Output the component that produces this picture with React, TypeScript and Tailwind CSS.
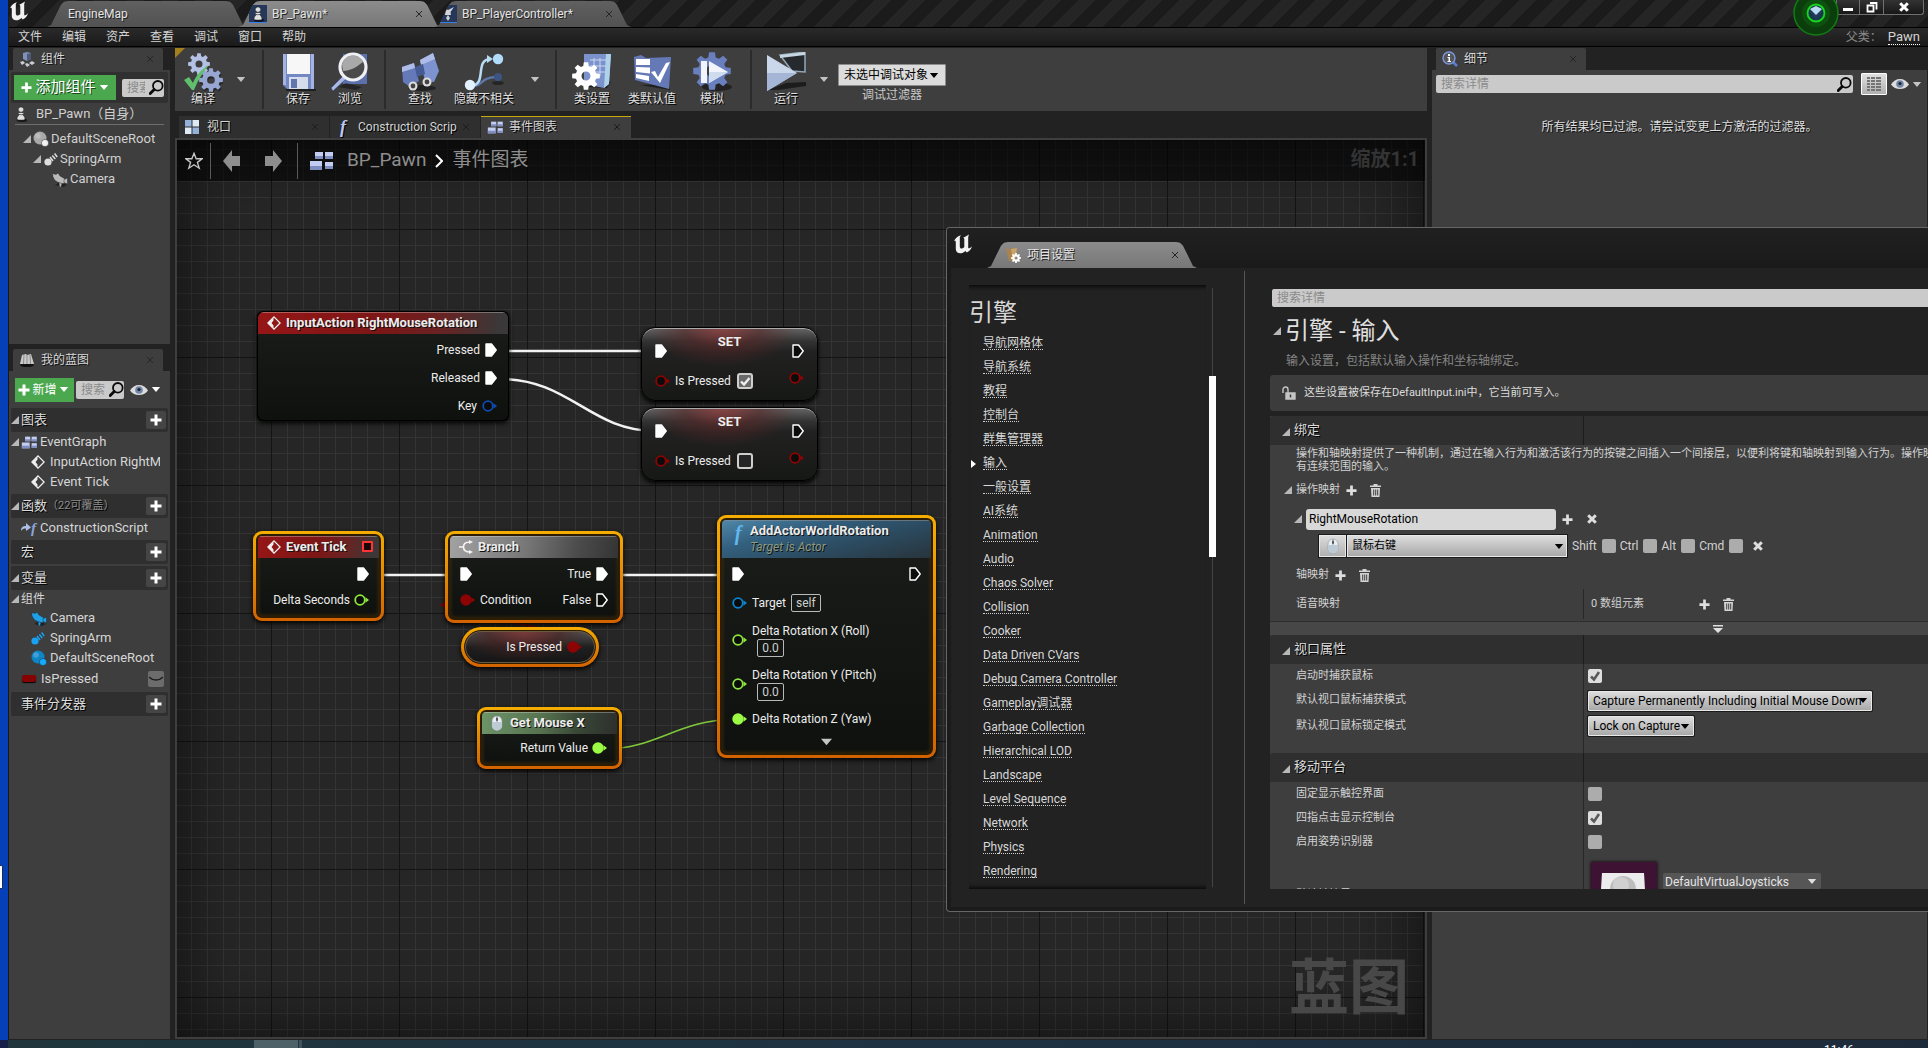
import React from 'react';
import clsx from 'clsx';

const menuItems = ['文件', '编辑', '资产', '查看', '调试', '窗口', '帮助'];

const settingsLinks = [
  '导航网格体', '导航系统', '教程', '控制台', '群集管理器', '输入', '一般设置', 'AI系统',
  'Animation', 'Audio', 'Chaos Solver', 'Collision', 'Cooker', 'Data Driven CVars',
  'Debug Camera Controller', 'Gameplay调试器', 'Garbage Collection', 'Hierarchical LOD',
  'Landscape', 'Level Sequence', 'Network', 'Physics', 'Rendering',
];

type IconProps = { className?: string };

/* ---------- small icons ---------- */

const gearPath = (cx: number, cy: number, r: number, teeth: number) => {
  const pts: string[] = [];
  const step = (Math.PI * 2) / teeth;
  for (let i = 0; i < teeth; i++) {
    const a = i * step;
    [[-0.34, 0.74], [-0.2, 1], [0.2, 1], [0.34, 0.74]].forEach(([o, k]) => {
      pts.push(`${(cx + Math.cos(a + o * step) * r * k).toFixed(2)} ${(cy + Math.sin(a + o * step) * r * k).toFixed(2)}`);
    });
  }
  const h = r * 0.32;
  return `M${pts.join('L')}ZM${cx - h} ${cy}a${h} ${h} 0 1 0 ${h * 2} 0a${h} ${h} 0 1 0 ${-h * 2} 0Z`;
};

const UnrealLogo = ({ className }: IconProps) => (
  <svg viewBox="0 0 20 20" className={clsx('h-5 w-5 shrink-0', className)} fill="#f2f2f2">
    <path d="M1 7C2.500 4 5 2 8 1.200L6.800 3v9.500c0 1.500 1 2.300 2.200 2 .9-.2 1.700-.8 2.300-1.500V5.200c0-.9-.4-1.300-1.100-1.500C12 3 14.200 2 16 .6L15.200 3v10.500c0 .8.500 1 1.200.7.900-.4 1.800-1.100 2.600-2-.9 3.200-3 5.200-5.200 6.300L12.400 17c-1.600 1.700-3.400 2.300-5.200 2.300-2.400 0-4.400-1.600-4.400-4.300V8.300C2.800 6.800 2.200 6.400 1 7z" />
  </svg>
);

const Pawn = ({ className }: IconProps) => (
  <svg viewBox="0 0 14 18" className={clsx('h-4 w-3.5 shrink-0', className)}>
    <ellipse cx="8" cy="16" rx="6" ry="2" fill="#000" opacity=".6" />
    <g fill="#e0e0e0" stroke="#222" strokeWidth=".6">
      <path d="M2.500 14.500C2.500 11.500 5 11 5 9h4c0 2 2.500 2.500 2.500 5.500 0 1.800-9 1.800-9 0z" />
      <ellipse cx="7" cy="8.500" rx="3.200" ry="1.300" />
      <circle cx="7" cy="4" r="3" />
    </g>
  </svg>
);

const Caret = ({ className }: IconProps) => (
  <svg viewBox="0 0 10 6" className={clsx('h-1.5 w-2.5 shrink-0', className)} fill="currentColor">
    <path d="M0 0h10L5 6z" />
  </svg>
);

const Tri = ({ className }: IconProps) => (
  <svg viewBox="0 0 8 8" className={clsx('h-2 w-2 shrink-0', className)} fill="#b8b8b8">
    <path d="M8 0v8H0z" />
  </svg>
);

const Plus = ({ className }: IconProps) => (
  <svg viewBox="0 0 12 12" className={clsx('h-3 w-3 shrink-0', className)} fill="currentColor">
    <path d="M4.500.5h3v4h4v3h-4v4h-3v-4h-4v-3h4z" />
  </svg>
);

const Cross = ({ className }: IconProps) => (
  <svg viewBox="0 0 10 10" className={clsx('h-2.5 w-2.5 shrink-0', className)} stroke="currentColor" strokeWidth="3" fill="none">
    <path d="M1.200 1.200l7.600 7.600M8.800 1.200L1.200 8.800" />
  </svg>
);

const Trash = ({ className }: IconProps) => (
  <svg viewBox="0 0 11 13" className={clsx('h-[13px] w-[11px] shrink-0', className)} fill="#d4d4d4">
    <path d="M3.500 0h4v1.500H11V3H0V1.500h3.500zM1 4h9l-.5 9h-8zM3.200 5.500v6h1v-6zm2 0v6h1v-6zm2 0v6h1v-6z" fillRule="evenodd" />
  </svg>
);

const CloseX = ({ className }: IconProps) => (
  <button aria-label="关闭" className={clsx('flex h-3 w-3 items-center justify-center', className)}>
    <svg viewBox="0 0 6 6" className="h-1.5 w-1.5" stroke="#262626" fill="none">
      <path d="M0 0l6 6M6 0L0 6" />
    </svg>
  </button>
);

const Search = ({ className }: IconProps) => (
  <svg viewBox="0 0 15 15" className={clsx('h-[15px] w-[15px] shrink-0', className)} fill="none" stroke="#0a0a0a">
    <circle cx="8.800" cy="5.800" r="4.800" strokeWidth="1.800" />
    <path d="M5.200 9.600L1.200 13.600" strokeWidth="2.800" strokeLinecap="round" />
  </svg>
);

const Eye = ({ className }: IconProps) => (
  <svg viewBox="0 0 18 12" className={clsx('h-3 w-[18px] shrink-0', className)}>
    <path d="M0 6.500C4-1 14-1 18 6.500c-4 6-14 6-18 0z" fill="#dcdcdc" />
    <circle cx="9" cy="6" r="3.800" fill="#6f86a8" />
    <circle cx="9" cy="5.500" r="1.600" fill="#223" />
  </svg>
);

const Blocks = ({ className }: IconProps) => (
  <svg viewBox="0 0 24 20" className={clsx('shrink-0', className)}>
    <g fill="#c3cdf2">
      <rect x="6" y="1" width="8" height="7" />
      <rect x="16" y="1" width="8" height="7" />
      <rect x="16" y="11" width="8" height="7" />
      <rect x="1" y="10" width="12" height="9" />
    </g>
    <path d="M6 5h8v3H6zM16 5h8v3h-8zM16 15h8v3h-8zM1 15h12v4H1z" fill="#7f8dc0" />
  </svg>
);

const EventDiamond = ({ className }: IconProps) => (
  <svg viewBox="0 0 14 14" className={clsx('h-3.5 w-3.5 shrink-0', className)}>
    <path d="M7 .9L13.100 7 7 13.100.9 7z" fill="none" stroke="#f0f0f0" strokeWidth="1.300" />
    <path d="M6.500 2v2.500L4.500 7l2 2.500V12L1 7z" fill="#f0f0f0" />
  </svg>
);

const BranchIcon = () => (
  <svg viewBox="0 0 14 14" className="h-3.5 w-3.5 shrink-0" fill="none" stroke="#f4f4f4" strokeWidth="1.600">
    <path d="M0 7h4M11 2C6 2 4.500 4 4.500 7s1.500 5 6.500 5" />
    <path d="M10 0l4 2-4 2zM10 10l4 2-4 2z" fill="#f4f4f4" stroke="none" />
  </svg>
);

const MouseIcon = () => (
  <svg viewBox="0 0 12 16" className="h-4 w-3 shrink-0">
    <rect x="1" y="1" width="10" height="14.500" rx="5" fill="#e9eef2" stroke="#8d979d" strokeWidth=".6" />
    <path d="M1 7h10v3.500a5 5 0 0 1-10 0z" fill="#bccbd6" />
    <path d="M6 1v6" stroke="#889" strokeWidth=".8" />
    <rect x="5" y="2.500" width="2" height="3.500" rx="1" fill="#555" />
  </svg>
);

const CameraIcon = ({ color }: { color: string }) => (
  <svg viewBox="0 0 16 15" className="h-[15px] w-4 shrink-0">
    <path d="M3 13l5-3 7 3-4 2z" fill="#111" opacity=".6" />
    <g fill={color} stroke="#1a1a1a" strokeWidth=".4">
      <path d="M.5 1.500L4 2.500 6 1l2 3 4.500 2.500L13 11l-4 1-6-3.500-2-3.500z" />
      <path d="M12 7.500l3.500-1.500v6L12 10.500zM7 10.500l3 1-1 3.500H7.500z" />
    </g>
  </svg>
);

const ArmIcon = ({ color }: { color: string }) => (
  <svg viewBox="0 0 14 14" className="h-3.5 w-3.5 shrink-0">
    <circle cx="4" cy="10" r="3.600" fill={color} />
    <path d="M6 5l3 4M8.300 3.500l3 3.500M10.600 1.500l2.600 3.500" stroke={color} strokeWidth="1.500" />
  </svg>
);

const SceneIcon = ({ color, dot }: { color: string; dot: string }) => (
  <svg viewBox="0 0 16 16" className="h-4 w-4 shrink-0">
    <circle cx="7" cy="7" r="6.500" fill={color} />
    <circle cx="5" cy="5" r="2.800" fill="#fff" opacity=".22" />
    <circle cx="12" cy="12" r="3.600" fill={dot} stroke="#2b2b2b" strokeWidth=".5" />
  </svg>
);

const FuncGlyph = ({ className }: IconProps) => (
  <span className={clsx("font-['Liberation_Serif',serif] font-bold italic", className)}>f</span>
);

/* ---------- toolbar icons ---------- */

const ToolIcon = ({ children }: { children: React.ReactNode }) => (
  <svg viewBox="0 0 40 40" className="h-10 w-10">{children}</svg>
);

const CompileIcon = () => (
  <ToolIcon>
    <path d={gearPath(29, 30, 12, 8)} fill="#000" opacity=".35" fillRule="evenodd" />
    <path d={gearPath(16, 12, 11, 8)} fill="#b4c0e4" fillRule="evenodd" />
    <path d={gearPath(28, 28, 12, 8)} fill="#97a6d2" fillRule="evenodd" />
    <path d="M1 28l5-3 4 6C13 23 19 17 26 13c-6 7-11 15-15 25H9z" fill="#5fbf6d" />
  </ToolIcon>
);

const SaveIcon = () => (
  <ToolIcon>
    <path d="M8 37h30v2H8z" fill="#000" opacity=".5" />
    <path d="M5 2h31v35H9l-4-4z" fill="#7488c4" />
    <path d="M5 2h3v31H5zM33 2h3v35h-3z" fill="#a4b4e2" />
    <path d="M9 2h23v20H9z" fill="#f7f7f7" />
    <path d="M11 25h19v12H11z" fill="#d7dcec" />
    <path d="M13 27h6v9h-6z" fill="#6274ae" />
  </ToolIcon>
);

const BrowseIcon = () => (
  <ToolIcon>
    <path d="M13 2h24v30H13z" fill="#5c70ac" />
    <path d="M8 35l8-4 16 4-6 3z" fill="#000" opacity=".4" />
    <path d="M13 24L1 36l2 3 13-12z" fill="#a9b8e4" stroke="#39466e" strokeWidth=".6" />
    <circle cx="23" cy="15" r="13" fill="#4a4a4a" stroke="#eef0f4" strokeWidth="3.200" />
    <path d="M12 13a11 11 0 0 1 21-3c-5 3-8 8-20 9z" fill="#c9c9c9" opacity=".75" />
  </ToolIcon>
);

const FindIcon = () => (
  <ToolIcon>
    <ellipse cx="22" cy="36" rx="14" ry="3" fill="#000" opacity=".45" />
    <path d="M2 15l12-4 5 18-9 6-7-5z" fill="#6379b8" />
    <path d="M20 8l13-7 6 18-5 11-9-1z" fill="#7d93d0" />
    <path d="M2 15l12-4 1 5-13 4zM20 8l13-7 2 6-14 6z" fill="#aebde8" />
    <path d="M15 15l8-3 2 10-8 3z" fill="#465a94" />
    <circle cx="13" cy="34" r="4.500" fill="#dcdcdc" />
    <circle cx="13" cy="34" r="2.400" fill="#444" />
    <circle cx="27" cy="30" r="4.500" fill="#dcdcdc" />
    <circle cx="27" cy="30" r="2.400" fill="#444" />
  </ToolIcon>
);

const HideIcon = () => (
  <ToolIcon>
    <ellipse cx="34" cy="31" rx="6" ry="2" fill="#000" opacity=".4" />
    <path d="M6 34C22 34 14 26 32 25" fill="none" stroke="#5d76a8" strokeWidth="2.500" />
    <path d="M6 34C24 34 10 8 26 7" fill="none" stroke="#b7dcf2" strokeWidth="2.500" />
    <path d="M23 3l6 4-6 4z" fill="#b7dcf2" />
    <circle cx="34" cy="7" r="5.200" fill="#b3dcfa" />
    <circle cx="6" cy="33" r="5.200" fill="#e2f1fb" />
    <circle cx="34" cy="25" r="4" fill="#3d5480" />
  </ToolIcon>
);

const ClassSettingsIcon = () => (
  <ToolIcon>
    <path d="M13 35l22 1 4-6-6-2z" fill="#000" opacity=".5" />
    <path d="M12 2h27l-2 30-5 4-20-4z" fill="#7b92cc" />
    <path d="M34 2h5l-2 30-5 4z" fill="#aed2ea" />
    <path d="M18 8h16M18 14h16M18 20h15M22 6v22M28 6v18" stroke="#ccd8f2" />
    <path d={gearPath(14, 24, 14, 8)} fill="#fff" fillRule="evenodd" />
  </ToolIcon>
);

const ClassDefaultsIcon = () => (
  <ToolIcon>
    <path d="M8 33l30 5-2-6z" fill="#000" opacity=".5" />
    <path d="M2 5l7-2 5 3 25-1-2 32L3 28z" fill="#6579b6" />
    <path d="M4 7h14v6H4zM4 15l14 .5v6L4 20zM4 22l13 2v5L4 26z" fill="#fff" />
    <path d="M19 20l4-1 3 6 8-14 4-1-10 21z" fill="#fff" />
  </ToolIcon>
);

const SimulateIcon = () => (
  <ToolIcon>
    <ellipse cx="25" cy="35" rx="15" ry="4" fill="#000" opacity=".45" />
    <path d={gearPath(20, 19, 19, 8)} fill="#6a80be" />
    <path d="M9 9h6v22H9zM17 9l19 11-19 11z" fill="#f1f5fb" />
    <path d="M17 20h19L17 31z" fill="#cfdcee" />
  </ToolIcon>
);

const PlayIcon = () => (
  <ToolIcon>
    <path d="M2 38l18-7 20-1v4L12 38z" fill="#000" opacity=".55" />
    <path d="M14 3l25-3v20l-13-1z" fill="#262a2e" stroke="#93a6b6" strokeWidth="1.500" />
    <path d="M14 3l25-3v3L14 6z" fill="#c7d6e2" />
    <path d="M1 3l30 18L1 39z" fill="#cad7ea" />
    <path d="M1 21h30L1 39z" fill="#a5b5d6" />
  </ToolIcon>
);

/* ---------- pins ---------- */

const ExecPin = ({ filled }: { filled?: boolean }) => (
  <svg viewBox="0 0 12 14" className="h-3.5 w-3 shrink-0">
    <path d="M1 1h5.500L11.200 7 6.500 13H1z" fill={filled ? '#fff' : '#0c0c0c'} stroke="#fff" strokeWidth="1.400" strokeLinejoin="round" />
  </svg>
);

const DataPin = ({ color, filled }: { color: string; filled?: boolean }) => (
  <svg viewBox="0 0 15 12" className="h-3 w-[15px] shrink-0">
    <circle cx="6" cy="6" r="4.800" fill={filled ? color : '#0b0b0b'} stroke={color} strokeWidth="1.800" />
    <path d="M11.500 3.200L15 6l-3.500 2.800z" fill={color} />
  </svg>
);

/* ---------- shared pieces ---------- */

const Check = ({ label, checked }: { label: string; checked?: boolean }) => (
  <span className="relative flex h-3.5 w-3.5 shrink-0">
    <input
      type="checkbox"
      aria-label={label}
      defaultChecked={checked}
      className="h-3.5 w-3.5 appearance-none rounded-[2px] bg-[#acacac] checked:bg-[#dedede]"
    />
    {checked && (
      <svg viewBox="0 0 14 14" className="pointer-events-none absolute inset-0" fill="none" stroke="#5a5a5a" strokeWidth="2.600">
        <path d="M3 7.500l3 3 5-7.500" />
      </svg>
    )}
  </span>
);

const PanelTab = ({ icon, label }: { icon: React.ReactNode; label: string }) => (
  <div className="ml-1 flex h-[22px] w-[150px] items-center rounded-t-[2px] bg-[#3e3e3e] pr-[7px] pl-1.5 text-[12px] text-[#d8d8d8] [text-shadow:1px_1px_0_#111]">
    <span className="flex w-[22px]">{icon}</span>
    <span className="flex-1">{label}</span>
    <CloseX />
  </div>
);

const WindowTab = ({ label, icon, active, className }: { label: string; icon?: React.ReactNode; active?: boolean; className?: string }) => (
  <div
    className={clsx(
      'flex h-[26px] shrink-0 items-center pr-4 text-[12px] text-[#e4e4e4] [clip-path:polygon(0_100%,4px_92%,14px_14%,17px_3%,21px_0,calc(100%-21px)_0,calc(100%-17px)_3%,calc(100%-14px)_14%,calc(100%-4px)_92%,100%_100%)] [text-shadow:1px_1px_0_#222]',
      active ? 'bg-linear-to-b from-[#8c8c8c] to-[#777]' : 'bg-linear-to-b from-[#606060] to-[#525252]',
      className,
    )}
  >
    {icon}
    <span className="flex-1">{label}</span>
    {icon && <CloseX />}
  </div>
);

const TabIcon = ({ children }: { children: React.ReactNode }) => (
  <span className="mr-[5px] flex h-[18px] w-[18px] items-center justify-center border-b border-[#3a7ce0] bg-[#26375c]">{children}</span>
);

/* ---------- left column ---------- */

const ComponentsPanel = () => (
  <section className="flex h-[296px] flex-col">
    <PanelTab
      label="组件"
      icon={
        <svg viewBox="0 0 16 16" className="h-4 w-4">
          <path d="M4 2l4-1 4 1v6l-4 2-4-2z" fill="#7f91b4" />
          <path d="M8 3l4-1v6l-4 2z" fill="#4c5a78" />
          <path d="M1 11l3-1 2 2-3 2zM10 12l3-2 3 2-3 2zM6 13l2-1 3 2-3 2z" fill="#c9cdd6" />
        </svg>
      }
    />
    <div className="flex-1 bg-[#3e3e3e] px-0.5 pt-0.5 text-[13px] text-[#d0d0d0]">
      <div className="flex h-[31px] items-center gap-1.5 rounded-[2px] bg-[#303030] px-[3px] pr-1">
        <button className="flex h-[25px] w-[102px] items-center justify-between bg-[#4ba84f] px-[7px] text-[15px] text-white [text-shadow:1px_1px_0_#1c4a1e]">
          <Plus className="h-[11px] w-[11px]" />
          添加组件
          <Caret className="h-[5px] w-2" />
        </button>
        <label className="flex h-[18px] min-w-0 flex-1 items-center rounded-[2px] bg-[#cacaca] pl-[5px]">
          <input aria-label="搜索组件" placeholder="搜索" className="w-[18px] min-w-0 text-[12px] outline-none placeholder:text-[#8a8a8a]" />
          <Search className="ml-auto" />
        </label>
      </div>
      <div className="flex h-[21px] items-center gap-2 pl-[3px]">
        <Pawn />
        BP_Pawn（自身）
      </div>
      <div className="mx-1 mb-1 h-px bg-[#6e6e6e]" />
      <div className="flex h-5 items-center pl-3">
        <Tri className="mr-0.5" />
        <SceneIcon color="#a9a9a9" dot="#f2f2f2" />
        <span className="ml-0.5">DefaultSceneRoot</span>
      </div>
      <div className="flex h-5 items-center pl-[22px]">
        <Tri className="mr-[3px]" />
        <ArmIcon color="#dedede" />
        <span className="ml-0.5">SpringArm</span>
      </div>
      <div className="flex h-5 items-center pl-[41px]">
        <CameraIcon color="#b9b9b9" />
        <span className="ml-0.5">Camera</span>
      </div>
    </div>
  </section>
);

const CategoryRow = ({ label, note, open, className }: { label: string; note?: string; open?: boolean; className?: string }) => (
  <div className={clsx('flex h-6 items-center rounded-[2px] bg-[#2f2f2f] pr-0.5 text-[13px] text-[#dcdcdc] [text-shadow:1px_1px_0_#000]', className)}>
    <span className="w-2.5">{open && <Tri />}</span>
    <span>{label}</span>
    {note && <span className="text-[11px] text-[#8c8c8c]">{note}</span>}
    <button aria-label={`添加${label}`} className="ml-auto flex h-[18px] w-5 items-center justify-center rounded-[2px] bg-[#454545] text-white">
      <Plus />
    </button>
  </div>
);

const MyBlueprintPanel = () => (
  <section className="mt-[5px] flex flex-1 flex-col">
    <PanelTab
      label="我的蓝图"
      icon={
        <svg viewBox="0 0 16 14" className="h-3.5 w-4">
          <ellipse cx="8" cy="12" rx="7" ry="2" fill="#111" />
          <path d="M1 11L3 2l4-1 1 1 4-1 3 10z" fill="#c9c9c9" />
          <path d="M5 2l-.5 9M8 2v9M11 2l.5 9" stroke="#8b8b8b" />
        </svg>
      }
    />
    <div className="flex-1 bg-[#3e3e3e] px-0.5 text-[13px] text-[#d6d6d6]">
      <div className="flex h-[37px] items-center px-1 pb-1">
        <button className="mt-1 flex h-6 w-[59px] items-center justify-between bg-[#4ba84f] px-[3px] pr-[5px] text-[12px] text-white">
          <Plus />
          新增
          <Caret className="h-[5px] w-2" />
        </button>
        <label className="mt-1 ml-0.5 flex h-[18px] w-12 items-center rounded-[2px] bg-[#cacaca] pl-[5px]">
          <input aria-label="搜索蓝图" placeholder="搜索" className="w-6 text-[12px] outline-none placeholder:text-[#8a8a8a]" />
          <Search className="ml-auto" />
        </label>
        <button aria-label="查看选项" className="mt-1 ml-1.5 flex items-center gap-[3px] text-white">
          <Eye />
          <Caret className="h-[5px] w-2" />
        </button>
      </div>
      <CategoryRow label="图表" open />
      <div className="flex h-5 items-center">
        <Tri className="mr-0.5" />
        <Blocks className="h-[13px] w-4" />
        <span className="ml-[3px]">EventGraph</span>
      </div>
      <div className="flex h-5 items-center pr-2 pl-5">
        <EventDiamond />
        <span className="ml-[5px] flex-1 overflow-hidden whitespace-nowrap">InputAction RightMouseRotation</span>
      </div>
      <div className="mb-0.5 flex h-5 items-center pl-5">
        <EventDiamond />
        <span className="ml-[5px]">Event Tick</span>
      </div>
      <CategoryRow label="函数" note="（22可覆盖）" open />
      <div className="mb-0.5 flex h-5 items-center pl-2.5">
        <svg viewBox="0 0 10 10" className="h-2.5 w-2.5" fill="#aebde6">
          <path d="M0 8c0-4 2-5 5-5V0l5 4.500L5 8V5.500C3 5.500 1 6 0 8z" />
        </svg>
        <FuncGlyph className="w-[9px] text-[15px] text-[#8fa4dc]" />
        <span>ConstructionScript</span>
      </div>
      <CategoryRow label="宏" className="mb-0.5" />
      <CategoryRow label="变量" open />
      <div className="flex h-[18px] items-center text-[12px]">
        <Tri className="mr-0.5" />
        组件
      </div>
      <div className="flex h-5 items-center gap-[3px] pl-5"><CameraIcon color="#1fa0e6" />Camera</div>
      <div className="flex h-5 items-center gap-[5px] pl-5"><ArmIcon color="#17a2f4" />SpringArm</div>
      <div className="flex h-5 items-center gap-[3px] pl-5"><SceneIcon color="#0d86c8" dot="#13aaff" />DefaultSceneRoot</div>
      <div className="mb-[3px] flex h-[21px] items-center pr-1 pl-[11px]">
        <span className="h-[7px] w-3.5 rounded-[2px] bg-[#860303] shadow-[0_1px_1px_#000]" />
        <span className="ml-[5px]">IsPressed</span>
        <button aria-label="切换可见性" className="ml-auto flex h-4 w-4 items-center justify-center rounded-[2px] bg-[#6c6c6c]">
          <svg viewBox="0 0 14 6" className="h-1.5 w-3.5" fill="none" stroke="#1c1c1c" strokeWidth="1.400"><path d="M0 1c4 4 10 4 14 0" /></svg>
        </button>
      </div>
      <CategoryRow label="事件分发器" />
    </div>
  </section>
);

/* ---------- toolbar ---------- */

const ToolButton = ({ icon, label, className }: { icon: React.ReactNode; label: string; className: string }) => (
  <button className={clsx('flex flex-col items-center text-[12px] leading-[14px] text-[#e0e0e0] [text-shadow:1px_1px_0_#000]', className)}>
    {icon}
    <span className="whitespace-nowrap">{label}</span>
  </button>
);

const Sep = () => <div className="h-[59px] w-0.5 shrink-0 bg-[#2b2b2b]" />;

const MoreButton = ({ label, className }: { label: string; className?: string }) => (
  <button aria-label={label} className={clsx('flex w-5 items-center justify-center text-[#c2c2c2]', className)}>
    <Caret className="h-[5px] w-2" />
  </button>
);

const Toolbar = () => (
  <div className="relative flex h-[63px] shrink-0 items-center bg-[#3e3e3e] pb-px">
    <span className="absolute top-0 left-0 h-2.5 w-2.5 bg-[#a3801c] [clip-path:polygon(0_0,100%_0,0_100%)]" />
    <ToolButton icon={<CompileIcon />} label="编译" className="w-14" />
    <MoreButton label="编译选项" className="mr-[11px]" />
    <Sep />
    <ToolButton icon={<SaveIcon />} label="保存" className="ml-2 w-[52px]" />
    <ToolButton icon={<BrowseIcon />} label="浏览" className="mr-2 w-[52px]" />
    <Sep />
    <ToolButton icon={<FindIcon />} label="查找" className="ml-2 w-[52px]" />
    <ToolButton icon={<HideIcon />} label="隐藏不相关" className="w-[76px]" />
    <MoreButton label="隐藏选项" className="mr-2.5 ml-[3px]" />
    <Sep />
    <ToolButton icon={<ClassSettingsIcon />} label="类设置" className="ml-[5px] w-[60px]" />
    <ToolButton icon={<ClassDefaultsIcon />} label="类默认值" className="w-[60px]" />
    <ToolButton icon={<SimulateIcon />} label="模拟" className="mr-2 w-[60px]" />
    <Sep />
    <ToolButton icon={<PlayIcon />} label="运行" className="ml-1.5 w-14" />
    <MoreButton label="运行选项" />
    <div className="ml-1 flex flex-col items-center gap-0.5 pt-2 text-[12px] leading-[14px] text-[#c8c8c8]">
      <span className="relative flex items-center">
        <select aria-label="调试对象" className="h-[22px] w-[108px] appearance-none rounded-[1px] border border-[#8d8d8d] bg-[#dcdcdc] pl-[5px] text-[12px] text-black outline-none">
          <option>未选中调试对象</option>
        </select>
        <Caret className="pointer-events-none absolute right-[7px] h-[5px] w-2 text-black" />
      </span>
      <span>调试过滤器</span>
    </div>
  </div>
);

/* ---------- graph ---------- */

const headerTones = {
  red: 'bg-[linear-gradient(100deg,#961616_0%,#7c1616_50%,#6a2222_72%,#3a3838_96%)]',
  grey: 'bg-[linear-gradient(100deg,#a2a2a2_0%,#777_45%,#4c4c4c_75%,#343434_100%)]',
  green: 'bg-[linear-gradient(100deg,#6d9468_0%,#56714f_45%,#3a4837_70%,#2d2f2c_100%)]',
  blue: 'bg-[linear-gradient(165deg,#4f86a8_0%,#33607f_30%,#2c4c62_60%,#28343c_100%)]',
};

type NodeProps = {
  title: string;
  subtitle?: string;
  icon: React.ReactNode;
  tone: keyof typeof headerTones;
  selected?: boolean;
  badge?: boolean;
  className: string;
  children: React.ReactNode;
};

const GraphNode = ({ title, subtitle, icon, tone, selected, badge, className, children }: NodeProps) => (
  <article
    className={clsx(
      'absolute text-[12px] text-[#ececec] shadow-[0_2px_5px_#000]',
      selected ? 'rounded-[9px] bg-linear-to-b from-[#f5ad00] to-[#d26200] p-[3px]' : 'rounded-[6px] bg-black p-px',
      className,
    )}
  >
    <div
      className={clsx(
        'h-full overflow-hidden rounded-[6px] bg-linear-to-b from-[#1a1d19] to-[#0e110e]',
        selected && 'border-2 border-[#2c1c04] shadow-[inset_0_0_4px_#4a3208]',
      )}
    >
      <header className={clsx('flex items-center border-t border-white/30 pr-1.5 pb-0.5 pl-[9px]', subtitle ? 'h-[38px]' : 'h-[22px]', headerTones[tone])}>
        {icon}
        <div className="ml-[5px] text-[13px] leading-[17px] font-bold [text-shadow:1px_1px_0_#111]">
          <h3 className="whitespace-nowrap">{title}</h3>
          {subtitle && <p className="text-[12px] font-normal text-[#8b9a83] italic">{subtitle}</p>}
        </div>
        {badge && <span className="ml-auto h-[11px] w-[11px] rounded-[1px] border-2 border-[#ff3535] bg-[#1a0505]" />}
      </header>
      {children}
    </div>
  </article>
);

const SetNode = ({ checked, className }: { checked?: boolean; className: string }) => (
  <article
    className={clsx(
      'absolute flex h-[74px] w-[177px] flex-col rounded-[14px] border border-black bg-[radial-gradient(ellipse_75px_38px_at_46%_0,#963c3cc0_0%,#5a262690_50%,transparent_100%),linear-gradient(#666_0,#333_13px,#222121_24px,#161816_100%)] px-[13px] text-[12px] text-[#ececec] shadow-[inset_0_1px_0_#aaa,0_2px_4px_#000]',
      className,
    )}
  >
    <h3 className="h-0 text-center text-[13px] leading-[28px] font-bold">SET</h3>
    <div className="mt-[7px] flex h-8 items-center justify-between">
      <ExecPin filled />
      <ExecPin />
    </div>
    <div className="flex h-7 items-center">
      <DataPin color="#8e0404" />
      <label className="ml-[5px] flex items-center gap-1.5">
        Is Pressed
        <span className="relative flex h-4 w-4">
          <input type="checkbox" defaultChecked={checked} className="h-4 w-4 appearance-none rounded-[3px] border-2 border-[#cfcfcf] bg-[#262626] checked:bg-[#6a6a6a]" />
          {checked && (
            <svg viewBox="0 0 16 16" className="absolute inset-0" fill="none" stroke="#eee" strokeWidth="2.400"><path d="M4 8.500l3 3L12.500 5" /></svg>
          )}
        </span>
      </label>
      <span className="mb-1.5 ml-auto"><DataPin color="#8e0404" /></span>
    </div>
  </article>
);

const NumberPinRow = ({ label }: { label: string }) => (
  <div className="flex h-11 items-center gap-[5px]">
    <DataPin color="#8fe63c" />
    <label className="flex flex-col leading-4">
      {label}
      <input defaultValue="0.0" className="ml-[5px] h-[18px] w-[27px] rounded-[2px] border border-[#b9b9b9] text-center text-[12px] text-[#cfcfcf] outline-none" />
    </label>
  </div>
);

const Wires = () => (
  <svg className="absolute inset-0 h-full w-full" fill="none">
    <g transform="translate(-177 -140)">
      <g stroke="#f2f2f2" strokeWidth="2.600">
        <path d="M500 351H655" />
        <path d="M500 379C570 379 590 431 655 431" />
        <path d="M370 575H460M608 575H733" />
      </g>
      <path d="M606 749C655 749 680 719.500 733 719.500" stroke="#7fc83a" strokeWidth="1.600" />
      <path d="M441 605l5-3v5zM514 623l22 4" stroke="#7a0505" strokeWidth="1.400" fill="#7a0505" />
    </g>
  </svg>
);

const Graph = () => (
  <div className="relative flex-1 overflow-hidden border-2 border-[#3e3e3e] bg-[#262626] [background-image:linear-gradient(to_right,#141414_1px,transparent_1px),linear-gradient(#141414_1px,transparent_1px),linear-gradient(to_right,#343434_1px,transparent_1px),linear-gradient(#343434_1px,transparent_1px)] [background-position:94px_89px,94px_89px,14px_9px,14px_9px] [background-size:128px_128px,128px_128px,16px_16px,16px_16px]">
    <div className="absolute inset-0 shadow-[inset_0_0_70px_#000000a0]" />
    <div className="absolute right-4 bottom-2.5 text-[60px] leading-[76px] font-bold text-[#484848]">蓝图</div>
    <Wires />

    <GraphNode title="InputAction RightMouseRotation" icon={<EventDiamond />} tone="red" className="top-[171px] left-20 h-[110px] w-[252px]">
      <div className="pt-0.5 pr-[11px] *:flex *:h-7 *:items-center *:justify-end *:gap-[5px]">
        <div>Pressed<ExecPin filled /></div>
        <div>Released<ExecPin filled /></div>
        <div>Key<DataPin color="#0c4bb0" /></div>
      </div>
    </GraphNode>

    <SetNode checked className="top-[187px] left-[464px]" />
    <SetNode className="top-[267px] left-[464px]" />

    <GraphNode title="Event Tick" icon={<EventDiamond />} tone="red" selected badge className="top-[391px] left-[76px] h-[90px] w-[131px]">
      <div className="pt-[3px] pr-2.5 *:flex *:h-[26px] *:items-center *:justify-end *:gap-1">
        <div><ExecPin filled /></div>
        <div>Delta Seconds<DataPin color="#8fe63c" /></div>
      </div>
    </GraphNode>

    <GraphNode title="Branch" icon={<BranchIcon />} tone="grey" selected className="top-[391px] left-[268px] h-[92px] w-[178px]">
      <div className="px-2.5 pt-[3px] *:flex *:h-[26px] *:items-center *:gap-[5px]">
        <div><ExecPin filled /><span className="ml-auto">True</span><ExecPin filled /></div>
        <div><DataPin color="#8e0404" filled />Condition<span className="ml-auto">False</span><ExecPin /></div>
      </div>
    </GraphNode>

    <article className="absolute top-[487px] left-[284px] h-10 w-[138px] rounded-full bg-linear-to-b from-[#f5ad00] to-[#d26200] p-[3px] text-[12px] text-[#ececec] shadow-[0_2px_5px_#000]">
      <div className="flex h-full items-center justify-end gap-[5px] rounded-full border border-[#2c1c04] bg-[radial-gradient(ellipse_66px_30px_at_45%_0,#8a3434c0_0%,#4a2020a0_55%,transparent_100%),linear-gradient(#565656,#1f1f1f_50%,#151515)] pr-[13px] shadow-[inset_0_0_0_1px_#6a5a40]">
        Is Pressed
        <DataPin color="#8e0404" filled />
      </div>
    </article>

    <GraphNode title="Get Mouse X" icon={<span className="flex pr-0.5"><MouseIcon /></span>} tone="green" selected className="top-[567px] left-[300px] h-[62px] w-[145px]">
      <div className="flex h-7 items-center justify-end gap-1 pr-2.5">
        Return Value
        <DataPin color="#9bfb45" filled />
      </div>
    </GraphNode>

    <GraphNode
      title="AddActorWorldRotation"
      subtitle="Target is Actor"
      icon={<FuncGlyph className="mb-3 w-[14px] text-center text-[20px] leading-5 text-[#62b8f0]" />}
      tone="blue"
      selected
      className="top-[375px] left-[540px] h-[243px] w-[219px]"
    >
      <div className="px-2.5 pt-[3px]">
        <div className="flex h-[26px] items-center justify-between"><ExecPin filled /><ExecPin /></div>
        <div className="flex h-[31px] items-center gap-[5px]">
          <DataPin color="#0a86d0" />
          Target
          <span className="h-[18px] rounded-[2px] border border-[#b9b9b9] px-1 leading-4 text-[#cfcfcf]">self</span>
        </div>
        <NumberPinRow label="Delta Rotation X (Roll)" />
        <NumberPinRow label="Delta Rotation Y (Pitch)" />
        <div className="flex h-[26px] items-center gap-[5px]">
          <DataPin color="#9bfb45" filled />
          Delta Rotation Z (Yaw)
        </div>
        <div className="flex h-5 items-center justify-center text-[#c4c4c4]"><Caret className="h-2 w-[11px]" /></div>
      </div>
    </GraphNode>

    <nav className="absolute inset-x-0 top-0 flex h-[41px] items-center bg-black/55 pl-2 text-[19px] text-[#8e8e8e]">
      <svg viewBox="0 0 20 20" className="h-5 w-[18px]" fill="none" stroke="#c8c8c8" strokeWidth="1.500">
        <path d="M10 1.500l2.400 6H19l-5.200 4 2 6.500L10 14.200 4.200 18l2-6.500L1 7.500h6.600z" />
      </svg>
      <div className="ml-[7px] h-9 w-px bg-[#5a5a5a]" />
      <button aria-label="后退" className="ml-3">
        <svg viewBox="0 0 17 22" className="h-[22px] w-[17px]" fill="#8e8e8e"><path d="M0 11L9 0v6h8v10H9v6z" /></svg>
      </button>
      <button aria-label="前进" className="ml-[25px]">
        <svg viewBox="0 0 17 22" className="h-[22px] w-[17px]" fill="#8e8e8e"><path d="M17 11L8 0v6H0v10h8v6z" /></svg>
      </button>
      <div className="ml-[15px] h-9 w-px bg-[#5a5a5a]" />
      <Blocks className="ml-[11px] h-5 w-6" />
      <span className="ml-3.5">BP_Pawn</span>
      <svg viewBox="0 0 8 14" className="mx-[9px] h-3.5 w-2" fill="none" stroke="#fff" strokeWidth="2"><path d="M1 1l6 6-6 6" /></svg>
      <span>事件图表</span>
      <span className="mr-1.5 ml-auto pb-1 text-[20px] font-bold text-[#343434]">缩放1:1</span>
    </nav>
  </div>
);

const GraphTab = ({ icon, label, active }: { icon: React.ReactNode; label: string; active?: boolean }) => (
  <button
    className={clsx(
      'flex h-[22px] w-[150px] items-center border-t pr-2 pb-px pl-1.5 text-left text-[12px] text-[#d4d4d4] [text-shadow:1px_1px_0_#000]',
      active ? 'border-[#c8a80c] bg-[#3e3e3e]' : 'border-transparent bg-[#2f2f2f]',
    )}
  >
    <span className="flex w-[22px] shrink-0">{icon}</span>
    <span className="flex-1 whitespace-nowrap">{label}</span>
    <svg viewBox="0 0 6 6" className="mr-[3px] h-1.5 w-1.5 shrink-0" stroke="#1c1c1c"><path d="M0 0l6 6M6 0L0 6" /></svg>
  </button>
);

/* ---------- details ---------- */

const DetailsPanel = () => (
  <aside className="flex w-[495px] shrink-0 flex-col">
    <PanelTab
      label="细节"
      icon={
        <svg viewBox="0 0 16 16" className="h-4 w-4">
          <path d="M10 10l5 5" stroke="#5b7fd0" strokeWidth="2.500" />
          <circle cx="7" cy="7" r="6" fill="#55565c" stroke="#7b98de" strokeWidth="1.400" />
          <path d="M6 3h2v2H6zM5.500 6H8v4h1v1H5.500v-1h1V7h-1z" fill="#fff" />
        </svg>
      }
    />
    <div className="flex-1 bg-[#3e3e3e]">
      <div className="flex h-7 items-center pr-[5px] pl-1">
        <label className="flex h-[18px] flex-1 items-center rounded-[2px] bg-[#cacaca] pr-px pl-[5px]">
          <input aria-label="搜索详情" placeholder="搜索详情" className="flex-1 text-[12px] outline-none placeholder:text-[#8a8a8a]" />
          <Search />
        </label>
        <button aria-label="属性矩阵" className="ml-2 flex h-[22px] w-[26px] items-center justify-center rounded-[1px] border border-white bg-linear-to-b from-[#e0e0e0] to-[#b0b0b0]">
          <svg viewBox="0 0 14 14" className="h-3.5 w-3.5" stroke="#757575" strokeWidth="2">
            <path d="M0 1h3M4 1h4M9 1h5M0 4h3M4 4h4M9 4h5M0 7h3M4 7h4M9 7h5M0 10h3M4 10h4M9 10h5M0 13h3M4 13h4M9 13h5" />
          </svg>
        </button>
        <button aria-label="显示选项" className="ml-1 flex items-center gap-[3px] text-[#c4c4c4]">
          <Eye />
          <Caret className="h-[5px] w-2" />
        </button>
      </div>
      <p className="pt-5 text-center text-[12px] leading-[18px] text-[#dedede] [text-shadow:1px_1px_0_#111]">所有结果均已过滤。请尝试变更上方激活的过滤器。</p>
    </div>
  </aside>
);

/* ---------- project settings window ---------- */

const SectionHeader = ({ title }: { title: string }) => (
  <div className="flex h-[29px] items-stretch rounded-tl-[3px] bg-[#2f2f2f]">
    <div className="flex w-[314px] items-center gap-1 border-r border-[#1c1c1c] pb-0.5 pl-3 text-[13px] text-[#dcdcdc] [text-shadow:1px_1px_0_#000]">
      <Tri className="mt-1" />
      {title}
    </div>
  </div>
);

const PropertyRow = ({ label, className, children }: { label: string; className: string; children: React.ReactNode }) => (
  <div className={clsx('flex items-stretch', className)}>
    <div className="flex w-[314px] shrink-0 items-center border-r border-[#282828] pl-[26px]">{label}</div>
    <div className="flex items-center pl-1">{children}</div>
  </div>
);

const ModeSelect = ({ label, value, className }: { label: string; value: string; className: string }) => (
  <span className="relative flex items-center">
    <select aria-label={label} className={clsx('h-5 appearance-none rounded-[1px] border border-[#e8e8e8] bg-linear-to-b from-[#dcdcdc] to-[#a9a9a9] pl-1 text-[12px] text-black shadow-[0_0_0_1px_#1a1a1a] outline-none', className)}>
      <option>{value}</option>
    </select>
    <Caret className="pointer-events-none absolute right-1 h-[5px] w-2 text-black" />
  </span>
);

const AddButton = ({ label, className }: { label: string; className?: string }) => (
  <button aria-label={label} className={clsx('text-[#dedede]', className)}><Plus className="h-[11px] w-[11px]" /></button>
);

const TrashButton = () => <button aria-label="清空" className="ml-[13px]"><Trash /></button>;

const SettingsDetails = () => (
  <div className="min-w-0 flex-1 overflow-hidden pt-[21px] pl-[25px] whitespace-nowrap">
    <div className="flex h-[600px] flex-col overflow-hidden">
      <input aria-label="搜索设置详情" placeholder="搜索详情" className="ml-0.5 h-[18px] shrink-0 rounded-l-[2px] bg-[#cacaca] pl-[5px] text-[12px] outline-none placeholder:text-[#8a8a8a]" />
      <h2 className="flex h-11 shrink-0 items-center gap-1 pt-1 pl-[3px] text-[24px] text-[#e0e0e0]"><Tri />引擎 - 输入</h2>
      <p className="h-6 shrink-0 pl-4 text-[12px] leading-5 text-[#858585]">输入设置，包括默认输入操作和坐标轴绑定。</p>
      <div className="mb-[5px] flex h-9 shrink-0 items-center rounded-l-[3px] bg-[#3c3c3c] pl-3 text-[11px] text-[#dcdcdc]">
        <svg viewBox="0 0 14 14" className="mr-2 h-3.5 w-3.5" fill="none" stroke="#c4c4c4" strokeWidth="1.400">
          <path d="M1 7V3.500a2.500 2.500 0 0 1 5 0V7" />
          <path d="M4 7h9v6H4z" fill="#c4c4c4" />
          <path d="M8.500 8.500v3" stroke="#333" />
        </svg>
        这些设置被保存在DefaultInput.ini中，它当前可写入。
      </div>

      <section className="shrink-0 bg-[#3e3e3e] text-[11px] text-[#d2d2d2]">
        <SectionHeader title="绑定" />
        <p className="pt-0.5 pl-[26px] leading-[13px]">
          操作和轴映射提供了一种机制，通过在输入行为和激活该行为的按键之间插入一个间接层，以便利将键和轴映射到输入行为。操作映射
          <br />
          有连续范围的输入。
        </p>
        <div className="flex h-[34px] items-center pl-3.5">
          <Tri className="mr-1" />
          操作映射
          <AddButton label="添加操作映射" className="ml-1.5" />
          <TrashButton />
        </div>
        <div className="flex h-6 items-center pl-6">
          <Tri className="mr-1" />
          <input aria-label="操作名称" defaultValue="RightMouseRotation" className="h-[21px] w-[250px] rounded-[3px] bg-[#d8d8d8] pl-[3px] text-[12px] text-black outline-none" />
          <AddButton label="添加按键" className="ml-1.5" />
          <button aria-label="移除操作" className="ml-3.5 text-[#dedede]"><Cross /></button>
        </div>
        <div className="flex h-[30px] items-center pl-[49px] text-[12px]">
          <button aria-label="选择按键" className="flex h-[22px] w-[27px] items-center justify-center border border-[#e8e8e8] bg-linear-to-b from-[#dcdcdc] to-[#b0b0b0] shadow-[0_0_0_1px_#1a1a1a]"><MouseIcon /></button>
          <span className="relative ml-px flex items-center">
            <select aria-label="按键" className="h-[22px] w-[220px] appearance-none border border-[#e8e8e8] bg-linear-to-b from-[#dcdcdc] to-[#a9a9a9] pl-1 text-[11px] text-black shadow-[0_0_0_1px_#1a1a1a] outline-none">
              <option>鼠标右键</option>
            </select>
            <Caret className="pointer-events-none absolute right-[3px] h-[5px] w-2 text-black" />
          </span>
          <div className="ml-[5px] flex items-center gap-1">
            {['Shift', 'Ctrl', 'Alt', 'Cmd'].map((key) => (
              <label key={key} className="flex items-center gap-[5px]">{key}<Check label={key} /></label>
            ))}
          </div>
          <button aria-label="移除按键" className="ml-2.5 text-[#dedede]"><Cross /></button>
        </div>
        <div className="flex h-7 items-center pl-[26px]">
          轴映射
          <AddButton label="添加轴映射" className="ml-1.5" />
          <TrashButton />
        </div>
        <PropertyRow label="语音映射" className="h-[30px]">
          <span className="w-[111px] pl-[3px]">0 数组元素</span>
          <AddButton label="添加语音映射" />
          <TrashButton />
        </PropertyRow>
        <div className="mt-0.5 flex h-3.5 items-center border-t border-[#2e2e2e] bg-[#474747] pl-[443px]">
          <svg viewBox="0 0 10 8" className="h-2 w-2.5" fill="#e0e0e0"><path d="M0 0h10v1.500H0zM0 3h10L5 8z" /></svg>
        </div>

        <SectionHeader title="视口属性" />
        <PropertyRow label="启动时捕获鼠标" className="h-6"><Check label="启动时捕获鼠标" checked /></PropertyRow>
        <PropertyRow label="默认视口鼠标捕获模式" className="h-[25px]">
          <ModeSelect label="默认视口鼠标捕获模式" value="Capture Permanently Including Initial Mouse Down" className="w-[284px]" />
        </PropertyRow>
        <PropertyRow label="默认视口鼠标锁定模式" className="h-[26px]">
          <ModeSelect label="默认视口鼠标锁定模式" value="Lock on Capture" className="w-[106px]" />
        </PropertyRow>
        <div className="h-3.5 w-[314px] border-r border-[#282828]" />

        <SectionHeader title="移动平台" />
        <PropertyRow label="固定显示触控界面" className="h-6"><Check label="固定显示触控界面" /></PropertyRow>
        <PropertyRow label="四指点击显示控制台" className="h-6"><Check label="四指点击显示控制台" checked /></PropertyRow>
        <PropertyRow label="启用姿势识别器" className="h-6"><Check label="启用姿势识别器" /></PropertyRow>
        <PropertyRow label="默认触控界面" className="h-[82px]">
          <svg viewBox="0 0 66 66" className="ml-[3px] h-[66px] w-[66px] shadow-[0_0_3px_#000]">
            <path d="M0 0h66v66H0z" fill="#3d1233" />
            <path d="M11 11h42l3 50H8z" fill="#ececec" />
            <circle cx="32" cy="27" r="13" fill="#bdbdbd" />
            <circle cx="30" cy="23" r="8" fill="#d0d0d0" />
          </svg>
          <span className="relative mb-7 ml-1.5 flex items-center">
            <select aria-label="默认触控界面" className="h-4 w-[158px] appearance-none rounded-[2px] bg-[#565656] pl-0.5 text-[12px] text-[#e4e4e4] outline-none">
              <option>DefaultVirtualJoysticks</option>
            </select>
            <Caret className="pointer-events-none absolute right-1 h-[5px] w-2 text-[#dedede]" />
          </span>
        </PropertyRow>
      </section>
    </div>
  </div>
);

const ProjectSettings = () => (
  <div className="absolute top-[227px] right-0 left-[946px] flex h-[685px] flex-col overflow-hidden rounded-l-[4px] border border-r-0 border-[#666] bg-[#1b1b1b] text-[#d8d8d8]">
    <header className="flex h-10 shrink-0 items-end bg-linear-to-b from-[#202020] to-[#1a1a1a] pl-1.5">
      <UnrealLogo className="mb-3.5" />
      <WindowTab
        active
        label="项目设置"
        className="ml-3.5 w-[210px] pl-[18px]"
        icon={
          <svg viewBox="0 0 16 16" className="mr-1.5 h-4 w-4">
            <path d="M1 1l5 1 6-1-2 12-6 1z" fill="#a98450" />
            <path d="M6 2l6-1-2 12-2 1z" fill="#c9a36a" />
            <path d={gearPath(11, 11, 5, 8)} fill="#fff" fillRule="evenodd" />
          </svg>
        }
      />
    </header>
    <div className="mb-1 ml-1 flex min-h-0 flex-1 bg-[#222]">
      <nav className="mt-[17px] mb-[18px] ml-[18px] w-[237px] shrink-0 shadow-[inset_0_6px_5px_-5px_#000,inset_0_-6px_5px_-5px_#000]">
        <h2 className="flex h-[47px] items-center pt-2 text-[24px]">引擎</h2>
        <ul>
          {settingsLinks.map((link) => (
            <li key={link} className="flex h-6 items-center pb-px">
              <span className="flex w-3.5 pl-0.5">
                {link === '输入' && <svg viewBox="0 0 5 8" className="h-2 w-[5px]" fill="#fff"><path d="M0 0l5 4-5 4z" /></svg>}
              </span>
              <a href="#" className="h-[13px] border-b border-dotted border-[#cfcfcf] text-[12px] leading-[12px]">{link}</a>
            </li>
          ))}
        </ul>
      </nav>
      <div className="mt-5 mb-5 ml-[3px] flex w-[7px] justify-center bg-[linear-gradient(#444,#444)] [background-position:center] [background-repeat:no-repeat] [background-size:1px_100%]">
        <div className="mt-[88px] h-[181px] w-[7px] bg-white" />
      </div>
      <div className="mt-[3px] mb-[3px] ml-7 w-px bg-[#555]" />
      <SettingsDetails />
    </div>
  </div>
);

/* ---------- page ---------- */

const App = () => {
  return (
    <div className="relative flex h-screen flex-col overflow-hidden bg-[#222] font-['Roboto','Noto_Sans_CJK_SC',sans-serif] whitespace-nowrap">
      <div className="flex min-h-0 flex-1">
        <div className="w-2 shrink-0 bg-[#0640b8]" />
        <div className="flex min-w-0 flex-1 flex-col border-l border-[#191919] pb-px">
          <header className="flex h-[27px] items-end bg-[repeating-linear-gradient(135deg,#1b1b1b_0_12px,#252525_12px_24px)]">
            <UnrealLogo className="mb-1.5" />
            <WindowTab label="EngineMap" className="ml-[18px] w-[200px] pl-[21px]" />
            <WindowTab
              active
              label="BP_Pawn*"
              className="-ml-2 w-[202px] pl-2.5"
              icon={<TabIcon><Pawn /></TabIcon>}
            />
            <WindowTab
              label="BP_PlayerController*"
              className="-ml-1.5 w-[196px] pl-1"
              icon={
                <TabIcon>
                  <svg viewBox="0 0 16 16" className="h-4 w-4">
                    <path d="M2 1l6 3 6-3-3.500 5 .5 3H5l.5-3z" fill="#d4d4d4" />
                    <path d="M8 9l2 3-2 3-2-3z" fill="#cfcfcf" />
                  </svg>
                </TabIcon>
              }
            />
            <div className="ml-auto flex self-start pr-1">
              <button aria-label="最小化" className="flex h-[15px] w-6 items-center justify-center rounded-bl-[3px] border border-t-0 border-[#707070] bg-linear-to-b from-[#333] to-[#181818]">
                <span className="mt-1 h-[3px] w-2.5 bg-white" />
              </button>
              <button aria-label="还原" className="flex h-[15px] w-6 items-center justify-center border border-t-0 border-l-0 border-[#707070] bg-linear-to-b from-[#333] to-[#181818]">
                <svg viewBox="0 0 12 12" className="h-3 w-3" fill="none" stroke="#fff" strokeWidth="1.800"><path d="M1.500 4.500h6v6h-6zM4 2h6.500v6.500" /></svg>
              </button>
              <button aria-label="关闭窗口" className="flex h-[15px] w-10 items-center justify-center rounded-br-[3px] border border-t-0 border-l-0 border-[#707070] bg-linear-to-b from-[#333] to-[#181818] text-white">
                <Cross />
              </button>
            </div>
          </header>
          <div className="flex h-5 shrink-0 items-center border-y border-black bg-linear-to-b from-[#2a2a2a] to-[#1a1a1a] pl-[9px] text-[12px] text-[#d4d4d4]">
            {menuItems.map((item) => (
              <button key={item} className="w-11 text-left">{item}</button>
            ))}
            <span className="ml-auto text-[#8a8a8a]">父类：</span>
            <a href="#" className="mr-2 ml-1.5 h-4 border-b border-dotted border-white text-[13px] leading-4">Pawn</a>
          </div>

          <div className="flex min-h-0 flex-1 gap-[5px] pt-px pr-px">
            <aside className="flex w-[161px] shrink-0 flex-col">
              <ComponentsPanel />
              <MyBlueprintPanel />
            </aside>
            <main className="flex min-w-0 flex-1 flex-col">
              <Toolbar />
              <div className="mt-[5px] flex shrink-0 gap-px pl-1">
                <GraphTab
                  label="视口"
                  icon={
                    <svg viewBox="0 0 14 14" className="h-3.5 w-3.5">
                      <path d="M0 0h6.500v6.500H0zM7.500 7.500H14V14H7.500z" fill="#93b2da" />
                      <path d="M7.500 0H14v6.500H7.500zM0 7.500h6.500V14H0z" fill="#dfe9f6" />
                    </svg>
                  }
                />
                <GraphTab label="Construction Scrip" icon={<FuncGlyph className="pl-1 text-[18px] leading-[18px] text-[#b9c8f2]" />} />
                <GraphTab active label="事件图表" icon={<Blocks className="h-[13px] w-4" />} />
              </div>
              <Graph />
            </main>
            <DetailsPanel />
          </div>
        </div>
      </div>

      <footer className="flex h-2 shrink-0 overflow-hidden bg-linear-to-r from-[#20363c] via-[#1e3244] to-[#1d2a3a] text-[12px] text-white">
        <div className="h-2 w-2 bg-[#16204a]" />
        <div className="ml-[246px] h-2 w-11 bg-[#4f6168]" />
        <div className="ml-px h-2 w-[3px] bg-[#40535a]" />
        <span className="mr-[74px] ml-auto pt-1 leading-3">11:46</span>
      </footer>

      <svg viewBox="0 0 46 46" className="absolute -top-2.5 right-[89px] h-[46px] w-[46px]">
        <circle cx="23" cy="23" r="22" fill="#0b3d0d" stroke="#127c14" strokeWidth="1.500" />
        <circle cx="23" cy="23" r="14" fill="#0e5a10" opacity=".7" />
        <circle cx="23" cy="23" r="8.500" fill="#173a4a" stroke="#19d61e" strokeWidth="1.800" />
        <path d="M17 19l6-3 6 3-1 4-5 7-5-7z" fill="#243a5c" />
        <path d="M17 19l6-3 6 3-6 6z" fill="#b9dcf2" />
      </svg>

      {/* page marker on the desktop edge */}
      <span className="absolute top-[865px] left-0 h-6 w-[3px] rounded-r-[2px] border border-l-0 border-[#1c2b52] bg-white" />

      <ProjectSettings />
    </div>
  );
}

export default App;
